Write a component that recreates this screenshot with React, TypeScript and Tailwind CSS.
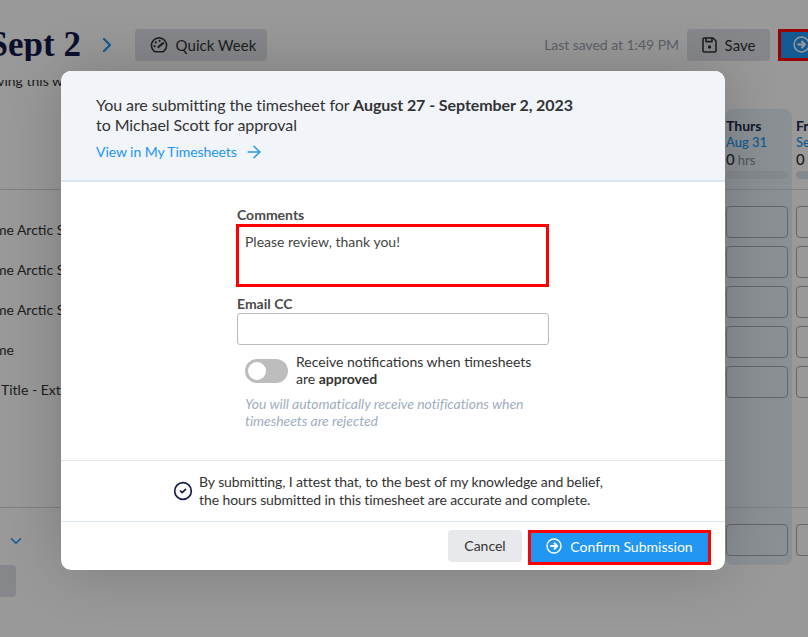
import { ArrowRight, ChevronDown, ChevronRight, CircleCheck } from "lucide-react";

const rowTops = ["a", "b", "c", "d", "e"];

function GaugeIcon() {
  return (
    <svg width="18" height="18" viewBox="0 0 18 18" fill="none" stroke="currentColor" strokeWidth="1.6" strokeLinecap="round">
      <path d="M4 15.2A7.6 7.6 0 1 1 14 15.2C12.5 16 5.5 16 4 15.2Z" />
      <path d="M8.4 11 13 7.2" strokeWidth="2.2" />
      <circle cx="4.6" cy="10.2" r="1.1" fill="currentColor" stroke="none" />
      <circle cx="5.8" cy="6.4" r="1.1" fill="currentColor" stroke="none" />
      <circle cx="9.6" cy="4.8" r="1.1" fill="currentColor" stroke="none" />
    </svg>
  );
}

function SaveIcon() {
  return (
    <svg width="15" height="16" viewBox="0 0 15 16" fill="none" stroke="currentColor" strokeWidth="1.6" strokeLinejoin="round">
      <path d="M1 2.2C1 1.5 1.5 1 2.2 1H11L14 4V13.8C14 14.5 13.5 15 12.8 15H2.2C1.5 15 1 14.5 1 13.8Z" />
      <path d="M4 1V4.6H10V1" />
      <circle cx="7.5" cy="10" r="1.7" fill="currentColor" stroke="none" />
    </svg>
  );
}

function SubmitIcon({ size }: { size: number }) {
  return (
    <svg width={size} height={size} viewBox="0 0 16 16" fill="none" stroke="currentColor">
      <circle cx="8" cy="8" r="7" strokeWidth="1.4" />
      <path d="M4.2 8H10.5" strokeWidth="2" />
      <path d="M8 4.8 11.2 8 8 11.2" strokeWidth="2" strokeLinejoin="round" />
    </svg>
  );
}

function DayColumn({ day, date, tinted }: { day: string; date: string; tinted?: boolean }) {
  return (
    <div className={tinted ? "w-[67px] h-[456px] rounded-lg bg-[#e8f0f7]" : "w-[16px] h-[456px] overflow-hidden"}>
      <div className={tinted ? "h-[81px] pl-px pr-1 pt-[9px] border-b border-[#d0d5dc]" : "h-[81px] pl-1 pt-[9px] border-b border-[#d0d5dc] w-[70px]"}>
        <div className="text-[14px] leading-[16px] font-bold text-[#1b2a4a]">{day}</div>
        <div className="text-[13px] leading-[16px] font-medium text-[#2196f3]">{date}</div>
        <div className="text-[15px] leading-[18px] font-medium text-[#333]">
          0<span className="ml-[3px] text-[13px] font-normal text-[#8a8f96]">hrs</span>
        </div>
        <div className="mt-[2px] h-2 w-[62px] rounded bg-[#dfe4ea]" />
      </div>
      <div className={tinted ? "pt-[16px] pl-px flex flex-col gap-2" : "pt-[16px] pl-1 flex flex-col gap-2"}>
        {rowTops.map((key) => (
          <div key={key} className="h-8 w-[62px] shrink-0 rounded border border-[#a8abb0]" />
        ))}
      </div>
      <div className={tinted ? "mt-[109px] border-t border-[#d0d5dc] pt-[16px] pl-px" : "mt-[109px] border-t border-[#d0d5dc] pt-[16px] pl-1 w-[70px]"}>
        <div className="h-8 w-[62px] rounded border border-[#a8abb0]" />
      </div>
    </div>
  );
}

export default function App() {
  return (
    <div className="relative h-[637px] w-[808px] overflow-hidden bg-white font-['Lato',sans-serif]">
      {/* Page behind the dialog */}
      <div className="flex h-[80px] items-start pt-[29px]">
        <div className="flex h-8 w-[81px] shrink-0 items-center justify-end overflow-hidden">
          <h1 className="whitespace-nowrap font-['Liberation_Serif',serif] text-[35px] font-bold text-[#141a4a]">Aug 27 - Sept 2</h1>
        </div>
        <ChevronRight className="ml-[14px] mt-[4px] text-[#2196f3]" size={24} strokeWidth={2.2} />
        <button className="ml-4 flex h-8 w-[132px] items-center justify-center gap-2 rounded bg-[#dfe2e7] pl-1 text-[15px] tracking-[0.05px] text-[#333]">
          <GaugeIcon />
          Quick Week
        </button>
        <span className="ml-auto mt-[7px] text-[14px] leading-[18px] tracking-[-0.05px] text-[#9aa5b1]">Last saved at 1:49 PM</span>
        <button className="ml-2 flex h-8 w-[83px] items-center justify-center gap-2 rounded bg-[#dfe2e7] text-[15px] text-[#333]">
          <SaveIcon />
          Save
        </button>
        <div className="ml-2 h-8 w-[30px] shrink-0 border-[3px] border-r-0 border-[#ff0000] bg-[#2196f3] pl-[12px] pt-[4px]">
          <span className="block text-white">
            <SubmitIcon size={17} />
          </span>
        </div>
      </div>
      <div className="flex">
        <div className="w-[61px] shrink-0 overflow-hidden">
          <p className="flex h-[29px] justify-end whitespace-nowrap text-[14px] leading-[2px] text-[#333]">
            <span className="-mr-[2px]">ving this w</span>
          </p>
          <div className="h-[81px] border-b border-[#d0d5dc]" />
          <div className="flex flex-col pt-[20px] text-[14px] leading-[40px] text-[#333]">
            <span className="-ml-[61px] whitespace-nowrap">Acme Name Arctic Summit</span>
            <span className="-ml-[61px] whitespace-nowrap">Acme Name Arctic Summit</span>
            <span className="-ml-[61px] whitespace-nowrap">Acme Name Arctic Summit</span>
            <span className="-ml-[61px] whitespace-nowrap">Acme Name</span>
            <span className="ml-px whitespace-nowrap">Title - Extended</span>
          </div>
          <div className="mt-[97px] border-t border-[#d0d5dc] pt-[24px] pl-[7px]">
            <ChevronDown className="text-[#2196f3]" size={18} />
          </div>
          <div className="mt-[15px] h-8 w-4 rounded-r bg-[#dfe2e7]" />
        </div>
        <div className="mt-[29px] flex grow justify-end">
          <DayColumn day="Thurs" date="Aug 31" tinted />
          <DayColumn day="Fri" date="Sep 1" />
        </div>
      </div>

      {/* Dim layer */}
      <div className="absolute inset-0 bg-black/40" />

      {/* Dialog */}
      <div className="absolute left-[61px] top-[71px] flex h-[499px] w-[664px] flex-col overflow-hidden rounded-[10px] bg-white shadow-[0_0_60px_rgba(0,0,0,0.2)]">
        <div className="h-[111px] border-b-2 border-[#dde5ed] bg-[#f1f4f9] px-[35px] pt-[24px] text-[16px] leading-[20px] tracking-[-0.07px] text-[#333]">
          <p>
            You are submitting the timesheet for <b className="font-bold">August 27 - September 2, 2023</b>
          </p>
          <p>to Michael Scott for approval</p>
          <div className="mt-[7px] flex items-center gap-[8px] text-[14px] text-[#2196f3]">
            View in My Timesheets
            <ArrowRight size={18} strokeWidth={1.8} className="scale-110" />
          </div>
        </div>

        <div className="flex h-[279px] flex-col items-center border-b border-[#dde5ed]">
          <div className="w-[312px] pt-[24px]">
            <div className="text-[14px] font-bold leading-[18px] text-[#4a4a4a]">Comments</div>
            <div className="-ml-px h-[63px] w-[313px] border-[3px] border-[#ff0000] px-[6px] pt-[7px] text-[14px] leading-[16px] text-[#444]">
              Please review, thank you!
            </div>
            <div className="mt-2 text-[14px] font-bold leading-[18px] text-[#4a4a4a]">Email CC</div>
            <div className="h-8 rounded-[3px] border border-[#bbb] bg-white" />
            <div className="mt-[8px] flex gap-2 pl-2">
              <div className="mt-[6px] flex h-6 w-[43px] shrink-0 items-center rounded-full bg-[#bdbdbd] pl-[3px]">
                <div className="h-[18px] w-[18px] rounded-full bg-white" />
              </div>
              <div className="text-[14px] leading-[17px] text-[#333]">
                Receive notifications when timesheets
                <br />
                are <b className="font-bold">approved</b>
              </div>
            </div>
            <p className="mt-[8px] whitespace-nowrap pl-2 text-[14px] italic leading-[17px] tracking-[-0.05px] text-[#a0aec0]">
              You will automatically receive notifications when
              <br />
              timesheets are rejected
            </p>
          </div>
        </div>

        <div className="flex h-[61px] items-center justify-center gap-[6px] border-b border-[#dde5ed] pr-[10px] text-[14px] leading-[18px] tracking-[-0.1px] text-[#333]">
          <CircleCheck size={20} strokeWidth={2} className="text-[#141a4a]" />
          <p>
            By submitting, I attest that, to the best of my knowledge and belief,
            <br />
            the hours submitted in this timesheet are accurate and complete.
          </p>
        </div>

        <div className="flex grow items-start justify-end gap-[6px] pr-[14px] pt-[8px]">
          <button className="h-8 w-[74px] rounded bg-[#e8e9ec] pb-[2px] text-[14px] text-[#333]">Cancel</button>
          <button className="flex h-[35px] w-[183px] items-center justify-center gap-2 border-[3px] border-[#ff0000] bg-[#2196f3] pb-[3px] text-[14px] text-white">
            <SubmitIcon size={16} />
            Confirm Submission
          </button>
        </div>
      </div>
    </div>
  );
}
